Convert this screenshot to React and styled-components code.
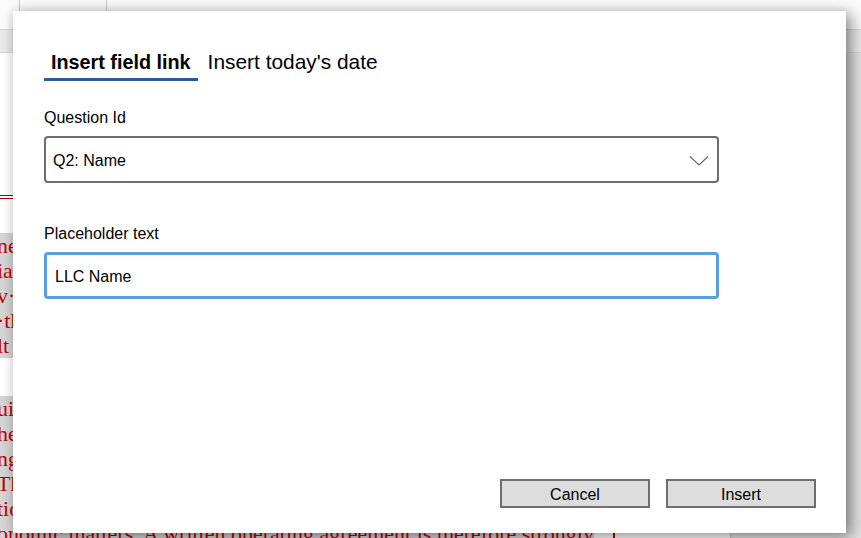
import React from 'react';
import styled, { createGlobalStyle } from 'styled-components';

const GlobalStyle = createGlobalStyle`
  html, body {
    margin: 0;
    padding: 0;
    overflow: hidden;
    background: #ffffff;
  }
`;

const Screen = styled.div`
  position: relative;
  width: 861px;
  height: 538px;
  overflow: hidden;
  display: flex;
  flex-direction: column;
  font-family: "Liberation Sans", Arial, sans-serif;
`;

const Toolbar = styled.div`
  height: 30px;
  flex-shrink: 0;
  display: flex;
  background: #fafafa;
  border-bottom: 1px solid #d4d4d4;
  box-sizing: border-box;
`;

const ToolCell = styled.div`
  width: ${(p) => p.$w}px;
  border-right: 1px solid #c8c8c8;
`;

const Ribbon = styled.div`
  height: 23px;
  flex-shrink: 0;
  background: #e9e9e9;
  border-bottom: 1px solid #d8d8d8;
  box-sizing: border-box;
`;

const Workspace = styled.div`
  flex: 1;
  display: flex;
  min-height: 0;
`;

const Page = styled.div`
  width: 730px;
  flex-shrink: 0;
  background: #ffffff;
  border-right: 1px solid #c4c4c4;
  padding-top: 142px;
  overflow: hidden;
  font-family: "Liberation Serif", "Times New Roman", serif;
  color: #c00000;
  font-size: 22px;
`;

const Side = styled.div`
  flex: 1;
  background: #e2e2e2;
`;

const DoubleRule = styled.div`
  height: 0;
  border-top: 4px double #a80000;
  margin-bottom: 34px;
`;

const Paragraph = styled.div`
  margin: 0 0 38px -3px;
`;

const Line = styled.div`
  height: 25px;
  line-height: 25px;
  white-space: nowrap;
  display: flex;
  align-items: center;
`;

const Mark = styled.span`
  background: #d4d4d4;
`;

const Caret = styled.span`
  display: inline-block;
  width: 2px;
  height: 22px;
  margin-left: 19px;
  background: #b00000;
`;

const Dialog = styled.div`
  position: absolute;
  left: 13px;
  top: 11px;
  width: 833px;
  height: 522px;
  box-sizing: border-box;
  background: #ffffff;
  box-shadow: 6px 4px 14px rgba(0, 0, 0, 0.38), 0 0 10px rgba(0, 0, 0, 0.14);
  padding: 35px 30px 25px 31px;
  display: flex;
  flex-direction: column;
  color: #000000;
`;

const Tabs = styled.div`
  display: flex;
  gap: 3px;
`;

const Tab = styled.div`
  padding: 4px 7px 4px;
  line-height: 24px;
  font-size: ${(p) => (p.$active ? '19.8px' : '20.9px')};
  font-weight: ${(p) => (p.$active ? 700 : 400)};
  border-bottom: 3px solid ${(p) => (p.$active ? '#2c5ba3' : 'transparent')};
`;

const Form = styled.div`
  display: flex;
  flex-direction: column;
  gap: 41px;
  margin-top: 27px;
  width: 675px;
`;

const Field = styled.div`
  display: flex;
  flex-direction: column;
  gap: 8px;
`;

const Label = styled.div`
  font-size: 16px;
  line-height: 20px;
`;

const Box = styled.div`
  height: 47px;
  box-sizing: border-box;
  display: flex;
  align-items: center;
  justify-content: space-between;
  border-radius: 4px;
  font-size: 16px;
  border: ${(p) => (p.$focused ? '3px solid #5a9ee2' : '2px solid #6e6e6e')};
  padding: ${(p) => (p.$focused ? '2px 14px 0 8px' : '2px 7px 0 7px')};
`;

const Chevron = styled.svg`
  width: 20px;
  height: 11px;
  margin-right: 1px;
`;

const Spacer = styled.div`
  flex: 1;
`;

const Actions = styled.div`
  display: flex;
  justify-content: flex-end;
  gap: 16px;
`;

const Button = styled.button`
  width: 150px;
  height: 29px;
  box-sizing: border-box;
  background: #dddddd;
  border: 2px solid #6e6e6e;
  border-radius: 0;
  font-family: "Liberation Sans", Arial, sans-serif;
  font-size: 16px;
  color: #000000;
  padding: 2px 0 0;
`;

const firstPara = [
  'nes: the members own the company directly',
  'ial interests are set out in the',
  'v·laws of the state where it is formed,',
  '·the members decide how it is run',
  'lt is registered with the secretary of state.',
];

const secondPara = [
  'uidance on how profits and losses are shared,',
  'he members may vote on their terms,',
  'ng rights and the duties of each manager.',
  'The state default rules rarely fit the',
  'tions of a small company, especially for',
];

export default function App() {
  return (
    <Screen>
      <GlobalStyle />
      <Toolbar>
        <ToolCell $w={19} />
        <ToolCell $w={86} />
      </Toolbar>
      <Ribbon />
      <Workspace>
        <Page>
          <DoubleRule />
          <Paragraph>
            {firstPara.map((text) => (
              <Line key={text}><Mark>{text}</Mark></Line>
            ))}
          </Paragraph>
          <Paragraph>
            {secondPara.map((text) => (
              <Line key={text}><Mark>{text}</Mark></Line>
            ))}
            <Line>
              <Mark>onomic matters. A written operating agreement is therefore strongly</Mark>
              <Caret />
            </Line>
          </Paragraph>
        </Page>
        <Side />
      </Workspace>

      <Dialog>
        <Tabs>
          <Tab $active>Insert field link</Tab>
          <Tab>Insert today's date</Tab>
        </Tabs>
        <Form>
          <Field>
            <Label>Question Id</Label>
            <Box>
              <span>Q2: Name</span>
              <Chevron viewBox="0 0 20 11">
                <path d="M1 1.5 L10 10 L19 1.5" fill="none" stroke="#6a6a6a" strokeWidth="1.2" />
              </Chevron>
            </Box>
          </Field>
          <Field>
            <Label>Placeholder text</Label>
            <Box $focused>
              <span>LLC Name</span>
            </Box>
          </Field>
        </Form>
        <Spacer />
        <Actions>
          <Button>Cancel</Button>
          <Button>Insert</Button>
        </Actions>
      </Dialog>
    </Screen>
  );
}
